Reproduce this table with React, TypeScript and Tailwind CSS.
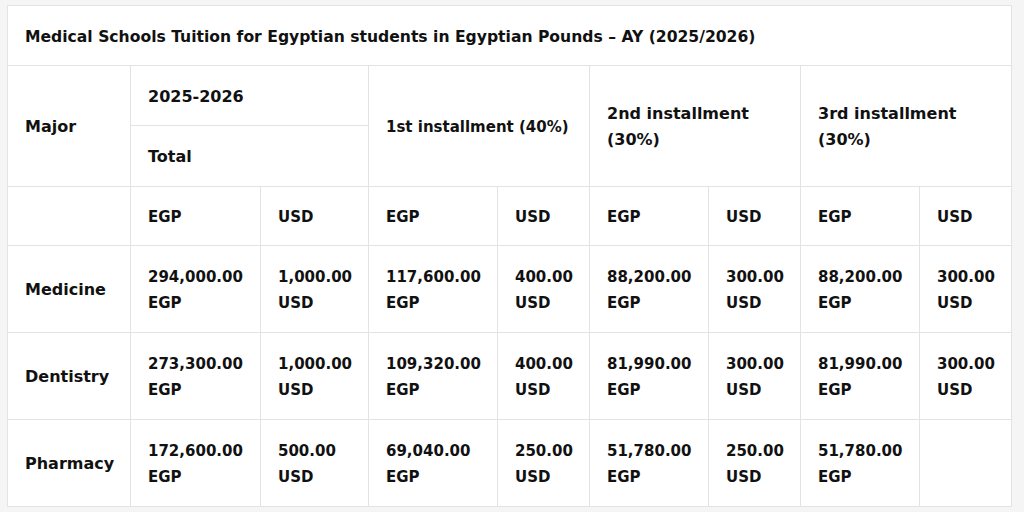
import React from "react";

const cell = "border border-[#e3e3e3] px-[17px] pt-[2px] text-left align-middle font-bold";

const rows = [
  {
    major: "Medicine",
    vals: [
      ["294,000.00", "EGP"],
      ["1,000.00", "USD"],
      ["117,600.00", "EGP"],
      ["400.00", "USD"],
      ["88,200.00", "EGP"],
      ["300.00", "USD"],
      ["88,200.00", "EGP"],
      ["300.00", "USD"],
    ],
  },
  {
    major: "Dentistry",
    vals: [
      ["273,300.00", "EGP"],
      ["1,000.00", "USD"],
      ["109,320.00", "EGP"],
      ["400.00", "USD"],
      ["81,990.00", "EGP"],
      ["300.00", "USD"],
      ["81,990.00", "EGP"],
      ["300.00", "USD"],
    ],
  },
  {
    major: "Pharmacy",
    vals: [
      ["172,600.00", "EGP"],
      ["500.00", "USD"],
      ["69,040.00", "EGP"],
      ["250.00", "USD"],
      ["51,780.00", "EGP"],
      ["250.00", "USD"],
      ["51,780.00", "EGP"],
      null,
    ],
  },
];

const App = () => {
  return (
    <div
      className="bg-[#f5f5f5] w-[1024px] h-[512px] pl-[7px] pt-[5px] text-[#111] text-[15px] leading-[26px]"
      style={{ fontFamily: '"DejaVu Sans", sans-serif' }}
    >
      <table className="bg-white border-collapse table-fixed w-[1004px]">
        <colgroup>
          <col className="w-[123px]" />
          <col className="w-[130px]" />
          <col className="w-[108px]" />
          <col className="w-[129px]" />
          <col className="w-[92px]" />
          <col className="w-[119px]" />
          <col className="w-[92px]" />
          <col className="w-[119px]" />
          <col className="w-[92px]" />
        </colgroup>
        <tbody>
          {/* タイトル行 */}
          <tr className="h-[60px]">
            <td colSpan={9} className={cell + " text-[15.6px]"}>
              Medical Schools Tuition for Egyptian students in Egyptian Pounds – AY (2025/2026)
            </td>
          </tr>
          {/* 見出し */}
          <tr className="h-[60px]">
            <td rowSpan={2} className={cell + " text-[16px]"}>Major</td>
            <td colSpan={2} className={cell + " text-[16px]"}>2025-2026</td>
            <td colSpan={2} rowSpan={2} className={cell + " whitespace-nowrap"}>1st installment (40%)</td>
            <td colSpan={2} rowSpan={2} className={cell + " text-[16px]"}>2nd installment<br />(30%)</td>
            <td colSpan={2} rowSpan={2} className={cell + " text-[16px]"}>3rd installment<br />(30%)</td>
          </tr>
          <tr className="h-[61px]">
            <td colSpan={2} className={cell + " text-[16px]"}>Total</td>
          </tr>
          <tr className="h-[59px]">
            <td className={cell}></td>
            <td className={cell}>EGP</td>
            <td className={cell}>USD</td>
            <td className={cell}>EGP</td>
            <td className={cell}>USD</td>
            <td className={cell}>EGP</td>
            <td className={cell}>USD</td>
            <td className={cell}>EGP</td>
            <td className={cell}>USD</td>
          </tr>
          {rows.map((r) => (
            <tr key={r.major} className="h-[87px]">
              <td className={cell + " text-[16px]"}>{r.major}</td>
              {r.vals.map((v, i) => (
                <td key={i} className={cell}>
                  {v && (
                    <>
                      {v[0]}
                      <br />
                      {v[1]}
                    </>
                  )}
                </td>
              ))}
            </tr>
          ))}
        </tbody>
      </table>
    </div>
  );
};

export default App;
